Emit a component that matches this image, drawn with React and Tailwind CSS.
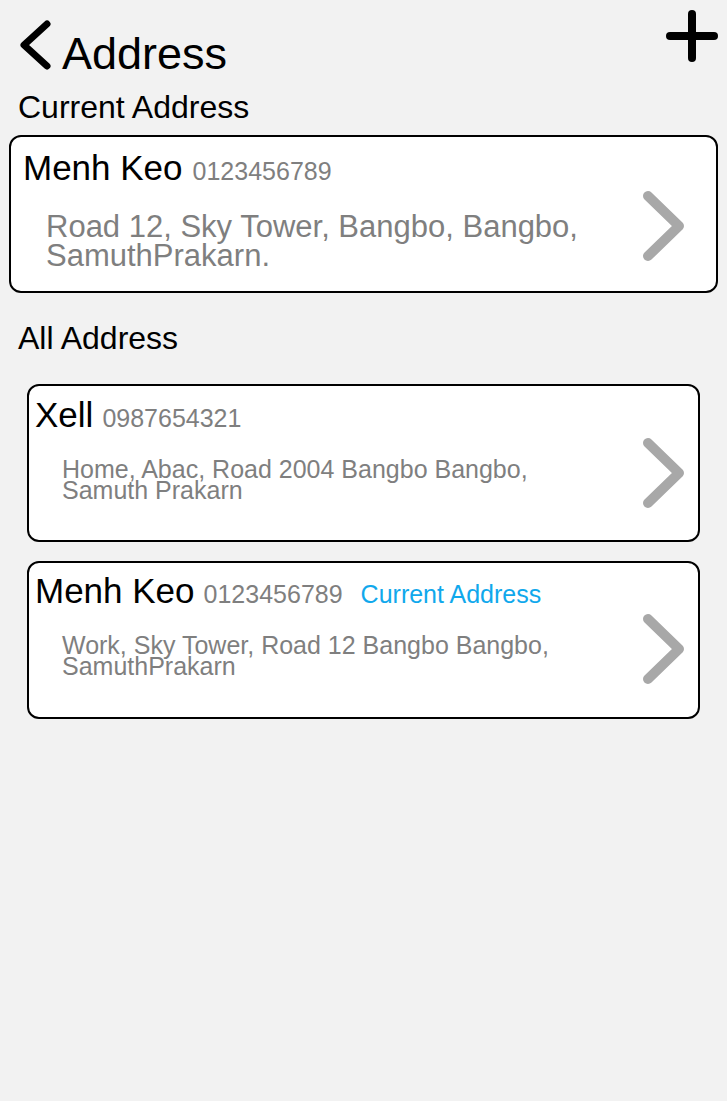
import React from 'react'

const ADDRESSES = [
  {
    name: 'Xell',
    phone: '0987654321',
    lines: ['Home, Abac, Road 2004 Bangbo Bangbo,', 'Samuth Prakarn'],
    current: false,
  },
  {
    name: 'Menh Keo',
    phone: '0123456789',
    lines: ['Work, Sky Tower, Road 12 Bangbo Bangbo,', 'SamuthPrakarn'],
    current: true,
  },
]

function Chevron({ className }) {
  return (
    <svg className={className} width="44" height="72" viewBox="0 0 44 72" fill="none" stroke="#a8a8a8" strokeWidth="10" strokeLinecap="round" strokeLinejoin="round">
      <polyline points="6,6 37,36 6,66" />
    </svg>
  )
}

function AddressCard({ item, first }) {
  return (
    <div className={`flex ${first ? 'mt-0 pt-[9px]' : 'mt-[19px] pt-[8px]'} mx-[27px] h-[158px] rounded-[12px] border-2 border-black bg-white pl-[6px]`}>
      <div className="flex-1">
        <div className="flex items-baseline">
          <span className="text-[35px] leading-[40px] text-black">{item.name}</span>
          <span className="ml-[9px] text-[25px] text-[#7f7f7f]">{item.phone}</span>
          {item.current && (
            <span className="ml-[18px] text-[25px] text-[#10a8ec]">Current Address</span>
          )}
        </div>
        <div className="mt-[21px] ml-[27px] text-[25px] leading-[21px] text-[#7f7f7f]">
          {item.lines.map(l => <div key={l}>{l}</div>)}
        </div>
      </div>
      <Chevron className="mt-[42px] mr-[12px]" />
    </div>
  )
}

export default function App() {
  return (
    <div className="min-h-[1101px] bg-[#f2f2f2] font-['Liberation_Sans',Arial,sans-serif]">
      {/* header */}
      <div className="flex items-start justify-between pl-[19px] pr-[9px] pt-[10px]">
        <div className="flex items-start mt-[10px]">
          <svg width="32" height="50" viewBox="0 0 32 50" fill="none" stroke="black" strokeWidth="7" strokeLinecap="round" strokeLinejoin="round">
            <polyline points="28,4 5,25 28,46" />
          </svg>
          <span className="ml-[11px] mt-[8px] text-[45px] leading-[52px] text-black">Address</span>
        </div>
        <svg width="52" height="52" viewBox="0 0 52 52" fill="none" stroke="black" strokeWidth="8" strokeLinecap="round">
          <line x1="26" y1="4" x2="26" y2="48" />
          <line x1="4" y1="26" x2="48" y2="26" />
        </svg>
      </div>

      <div className="mt-[9px] pl-[18px] text-[32px] leading-[36px] text-black">Current Address</div>

      <div className="flex mt-[10px] mx-[9px] h-[158px] rounded-[12px] border-2 border-black bg-white pl-[12px] pt-[11px]">
        <div className="flex-1">
          <div className="flex items-baseline">
            <span className="text-[35px] leading-[40px] text-black">Menh Keo</span>
            <span className="ml-[10px] text-[25px] text-[#7f7f7f]">0123456789</span>
          </div>
          <div className="mt-[21px] ml-[23px] text-[31px] leading-[29px] text-[#7f7f7f]">
            <div>Road 12, Sky Tower, Bangbo, Bangbo,</div>
            <div>SamuthPrakarn.</div>
          </div>
        </div>
        <Chevron className="mt-[42px] mr-[30px]" />
      </div>

      <div className="mt-[27px] pl-[18px] text-[32px] leading-[36px] text-black">All Address</div>

      <div className="mt-[28px]">
        {ADDRESSES.map((a, i) => (
          <AddressCard key={a.name} item={a} first={i === 0} />
        ))}
      </div>
    </div>
  )
}
